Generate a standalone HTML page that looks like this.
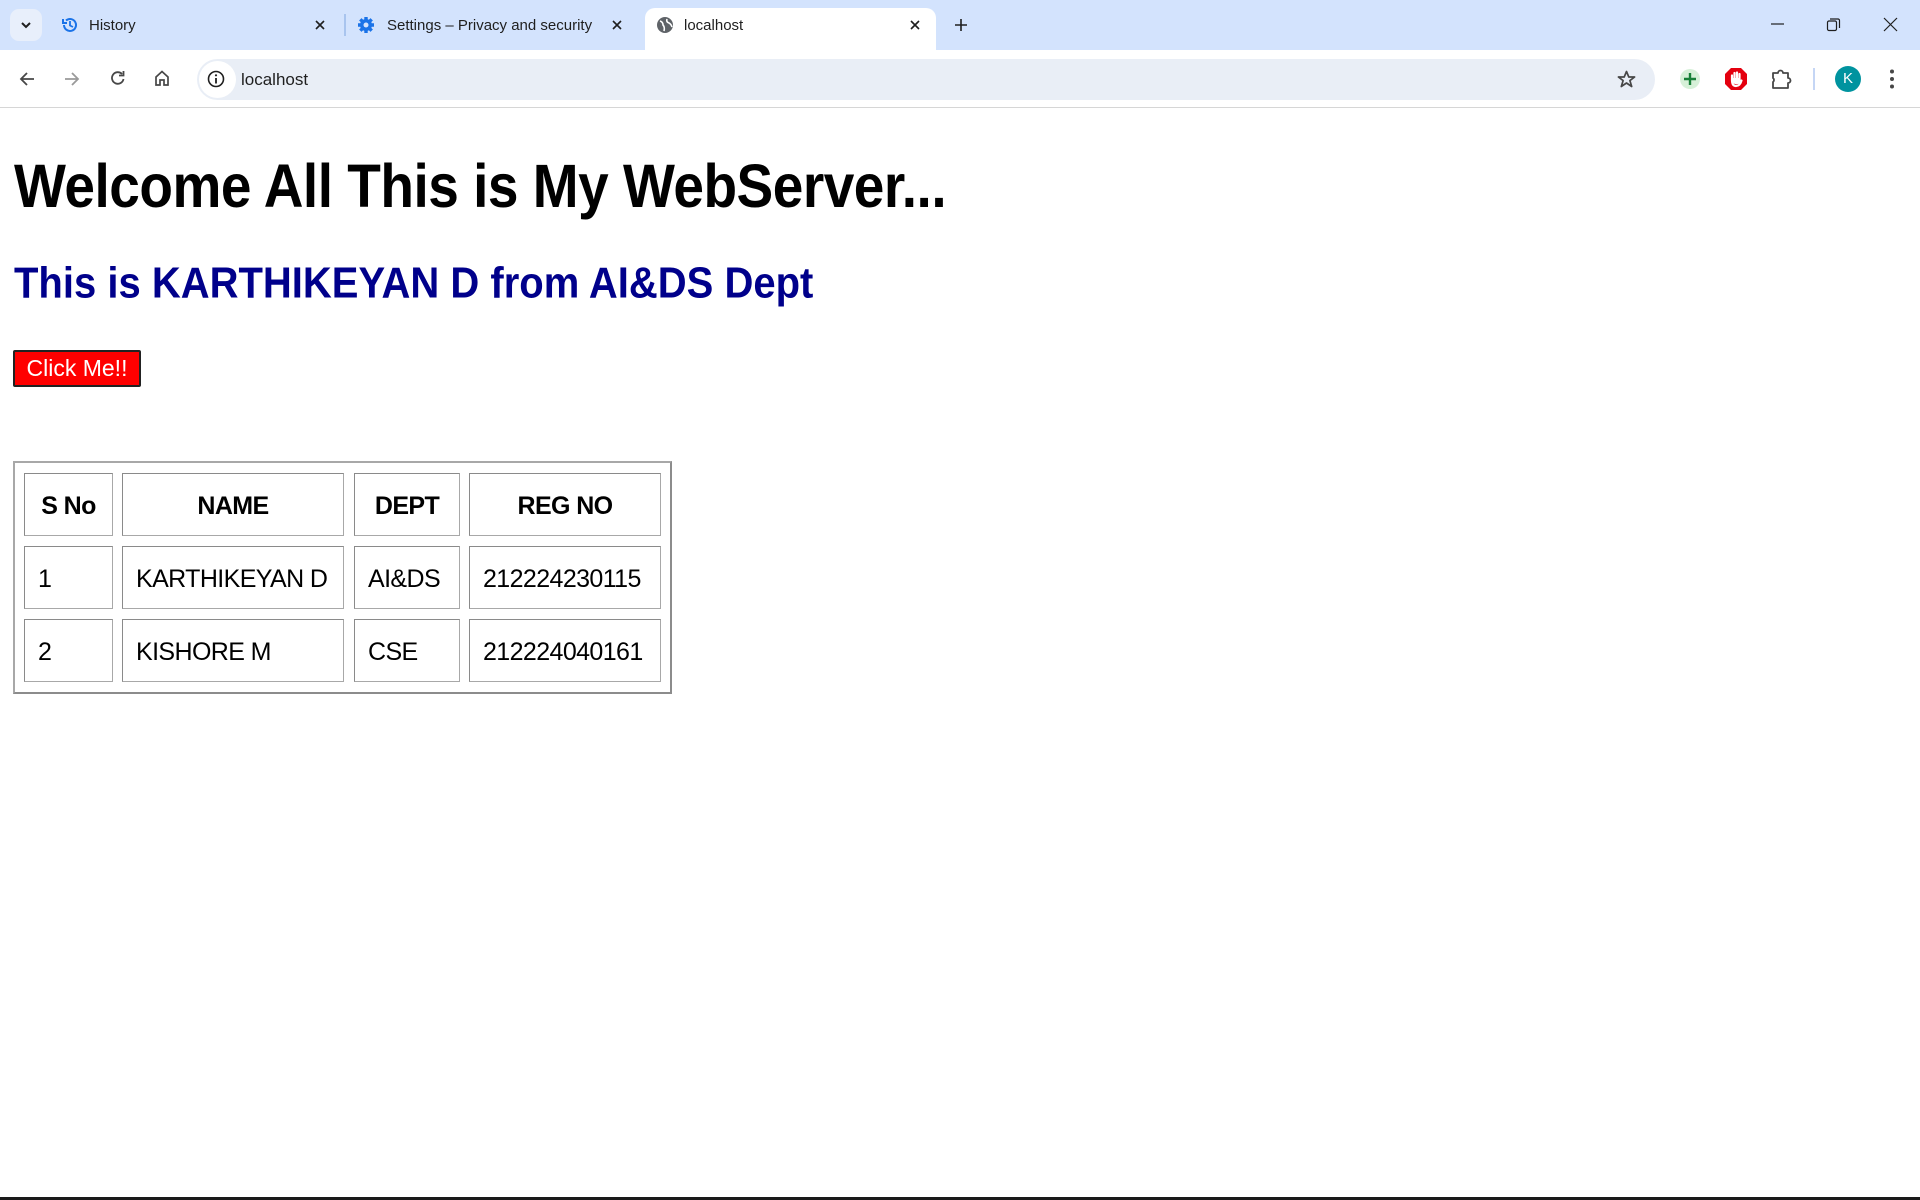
<!DOCTYPE html>
<html><head><meta charset="utf-8">
<style>
*{margin:0;padding:0;box-sizing:border-box}
body{width:1920px;height:1200px;position:relative;overflow:hidden;background:#fff;font-family:"Liberation Sans",Arial,sans-serif}
.a{position:absolute}
.tabbar{left:0;top:0;width:1920px;height:50px;background:#d3e3fd}
.tt{font-size:15px;color:#1f1f1f;top:17px}
.toolbar{left:0;top:50px;width:1920px;height:58px;background:#fff;border-bottom:1px solid #d6d6d6}
.omni{left:197px;top:59px;width:1458px;height:41px;background:#e9eef6;border-radius:21px}
svg{position:absolute;overflow:visible}
td,th{position:absolute;border:1px solid #8a8a8a;border-right-color:#a8a8a8;border-bottom-color:#a8a8a8;font-size:25px;line-height:64px;padding-left:13px;color:#000;white-space:nowrap;letter-spacing:-0.6px}
th{font-weight:bold;text-align:center;padding-left:0}
</style></head><body>
<div class="a tabbar"></div>
<div class="a" style="left:10px;top:9px;width:32px;height:32px;background:#e8effb;border-radius:9px"></div>
<svg style="left:20px;top:20px" width="12" height="10"><path d="M2 3 L6 7 L10 3" stroke="#1f1f1f" stroke-width="2" fill="none"/></svg>
<svg style="left:61px;top:16px" width="18" height="18"><path d="M3 9 A6 6 0 1 0 5 4.5" stroke="#1a73e8" stroke-width="2" fill="none"/><path d="M2 3 L2 7 L6 7" stroke="#1a73e8" stroke-width="2" fill="none"/><path d="M9 5 V9.5 L12 11" stroke="#1a73e8" stroke-width="1.8" fill="none"/></svg>
<div class="a tt" style="left:89px">History</div>
<svg style="left:315px;top:20px" width="10" height="10"><path d="M1 1L9 9M9 1L1 9" stroke="#1f1f1f" stroke-width="1.6"/></svg>
<div class="a" style="left:344px;top:14px;width:2px;height:22px;background:#a8c4ee"></div>
<svg style="left:357px;top:16px" width="18" height="18"><circle cx="9" cy="9" r="6" fill="#1a73e8"/><g stroke="#1a73e8" stroke-width="3.4"><path d="M9 1V17M1 9H17M3.3 3.3L14.7 14.7M14.7 3.3L3.3 14.7"/></g><circle cx="9" cy="9" r="2.5" fill="#d3e3fd"/></svg>
<div class="a tt" style="left:387px">Settings – Privacy and security</div>
<svg style="left:612px;top:20px" width="10" height="10"><path d="M1 1L9 9M9 1L1 9" stroke="#1f1f1f" stroke-width="1.6"/></svg>
<div class="a" style="left:645px;top:8px;width:291px;height:44px;background:#fff;border-radius:10px 10px 0 0"></div>
<svg style="left:656px;top:16px" width="18" height="18"><circle cx="9" cy="9" r="8" fill="#5f6368"/><path d="M4 5 Q7 6 7 9 Q9 11 8 15 M11 3 Q10 6 13 7 Q15 8 16 11" stroke="#fff" stroke-width="1.6" fill="none"/></svg>
<div class="a tt" style="left:684px">localhost</div>
<svg style="left:910px;top:20px" width="10" height="10"><path d="M1 1L9 9M9 1L1 9" stroke="#1f1f1f" stroke-width="1.6"/></svg>
<svg style="left:954px;top:18px" width="14" height="14"><path d="M7 1V13M1 7H13" stroke="#1f1f1f" stroke-width="1.6"/></svg>
<svg style="left:1771px;top:23px" width="13" height="2"><path d="M0 1H13" stroke="#1f1f1f" stroke-width="1.2"/></svg>
<svg style="left:1827px;top:18px" width="13" height="13"><rect x="0.5" y="3" width="9" height="9.5" rx="1.5" stroke="#1f1f1f" fill="none" stroke-width="1.2"/><path d="M3 1H11A1.5 1.5 0 0 1 12.5 2.5V10" stroke="#1f1f1f" fill="none" stroke-width="1.2"/></svg>
<svg style="left:1884px;top:18px" width="13" height="13"><path d="M0 0L13 13M13 0L0 13" stroke="#1f1f1f" stroke-width="1.2"/></svg>

<div class="a toolbar"></div>
<svg style="left:19px;top:71px" width="16" height="16"><path d="M15 8H2M8 2L2 8L8 14" stroke="#474747" stroke-width="1.8" fill="none"/></svg>
<svg style="left:64px;top:71px" width="16" height="16"><path d="M1 8H14M8 2L14 8L8 14" stroke="#9a9a9a" stroke-width="1.8" fill="none"/></svg>
<svg style="left:110px;top:70px" width="16" height="16"><path d="M13.5 9A5.8 5.8 0 1 1 12 4" stroke="#474747" stroke-width="1.8" fill="none"/><path d="M13.5 1V5.5H9" stroke="#474747" stroke-width="1.8" fill="none"/></svg>
<svg style="left:154px;top:70px" width="16" height="16"><path d="M2 7L8 1.5L14 7V15H10V10H6V15H2Z" stroke="#474747" stroke-width="1.7" fill="none"/></svg>
<div class="a omni"></div>
<div class="a" style="left:199px;top:61px;width:37px;height:37px;background:#fff;border-radius:50%"></div>
<svg style="left:207px;top:70px" width="18" height="18"><circle cx="9" cy="9" r="7.5" stroke="#1f1f1f" stroke-width="1.6" fill="none"/><path d="M9 8V13.5" stroke="#1f1f1f" stroke-width="1.8"/><circle cx="9" cy="5.3" r="1.1" fill="#1f1f1f"/></svg>
<div class="a" style="left:241px;top:70px;font-size:17px;color:#1f1f1f">localhost</div>
<svg style="left:1617px;top:70px" width="19" height="19"><path d="M9.5 1.5L11.8 7H17.6L12.9 10.6L14.7 16.5L9.5 13L4.3 16.5L6.1 10.6L1.4 7H7.2Z" stroke="#474747" stroke-width="1.7" fill="none" stroke-linejoin="round"/></svg>
<div class="a" style="left:1680px;top:69px;width:20px;height:20px;background:#d6f0d8;border-radius:50%"></div>
<svg style="left:1683px;top:72px" width="14" height="14"><path d="M7 1V13M1 7H13" stroke="#188038" stroke-width="2.4"/></svg>
<svg style="left:1724px;top:67px" width="24" height="24"><path d="M7 1H17L23 7V17L17 23H7L1 17V7Z" fill="#e4000f"/><path d="M8 14V8.5M10.5 13V6M13 13V5.5M15.5 13V7M8 13Q8 19 12 19Q16 19 17.5 13.5" stroke="#fff" stroke-width="2.2" fill="none" stroke-linecap="round"/><path d="M8 11H16V16Q12 19 8 15Z" fill="#fff"/></svg>
<svg style="left:1771px;top:68px" width="22" height="22"><path d="M2 5H7A2.5 2.5 0 0 1 12 5H17V10A2.5 2.5 0 0 1 17 15V20H2V14A2.5 2.5 0 0 0 2 10Z" stroke="#474747" stroke-width="1.8" fill="none" stroke-linejoin="round"/></svg>
<div class="a" style="left:1813px;top:68px;width:2px;height:22px;background:#c5d6f5"></div>
<div class="a" style="left:1835px;top:66px;width:26px;height:26px;background:#00939f;border-radius:50%;color:#fff;font-size:15px;text-align:center;line-height:26px">K</div>
<svg style="left:1890px;top:69px" width="4" height="20"><circle cx="2" cy="2.5" r="2" fill="#474747"/><circle cx="2" cy="10" r="2" fill="#474747"/><circle cx="2" cy="17.5" r="2" fill="#474747"/></svg>

<div class="a" style="left:14px;top:150px;font-size:55px;font-weight:bold;color:#000;white-space:nowrap;letter-spacing:-0.5px;transform:scaleY(1.12);transform-origin:0 0">Welcome All This is My WebServer...</div>
<div class="a" style="left:14px;top:259px;font-size:40px;font-weight:bold;color:#00008b;white-space:nowrap;transform:scaleY(1.1);transform-origin:0 0">This is KARTHIKEYAN D from AI&amp;DS Dept</div>
<div class="a" style="left:13px;top:350px;width:128px;height:37px;background:#ff0000;border:2px solid #222;border-radius:2px;color:#fff;font-size:23px;line-height:32px;text-align:center">Click Me!!</div>

<div class="a" style="left:13px;top:461px;width:659px;height:233px;border:2px solid #8c8c8c;border-top-color:#a8a8a8;border-left-color:#a8a8a8"></div>
<table>
<tr>
<th style="left:24px;top:473px;width:89px;height:63px">S No</th>
<th style="left:122px;top:473px;width:222px;height:63px">NAME</th>
<th style="left:354px;top:473px;width:106px;height:63px">DEPT</th>
<th style="left:469px;top:473px;width:192px;height:63px">REG NO</th>
</tr>
<tr>
<td style="left:24px;top:546px;width:89px;height:63px">1</td>
<td style="left:122px;top:546px;width:222px;height:63px">KARTHIKEYAN D</td>
<td style="left:354px;top:546px;width:106px;height:63px">AI&amp;DS</td>
<td style="left:469px;top:546px;width:192px;height:63px">212224230115</td>
</tr>
<tr>
<td style="left:24px;top:619px;width:89px;height:63px">2</td>
<td style="left:122px;top:619px;width:222px;height:63px">KISHORE M</td>
<td style="left:354px;top:619px;width:106px;height:63px">CSE</td>
<td style="left:469px;top:619px;width:192px;height:63px">212224040161</td>
</tr>
</table>
<div class="a" style="left:0;top:1197px;width:1920px;height:3px;background:#1a1a1a"></div>
</body></html>
